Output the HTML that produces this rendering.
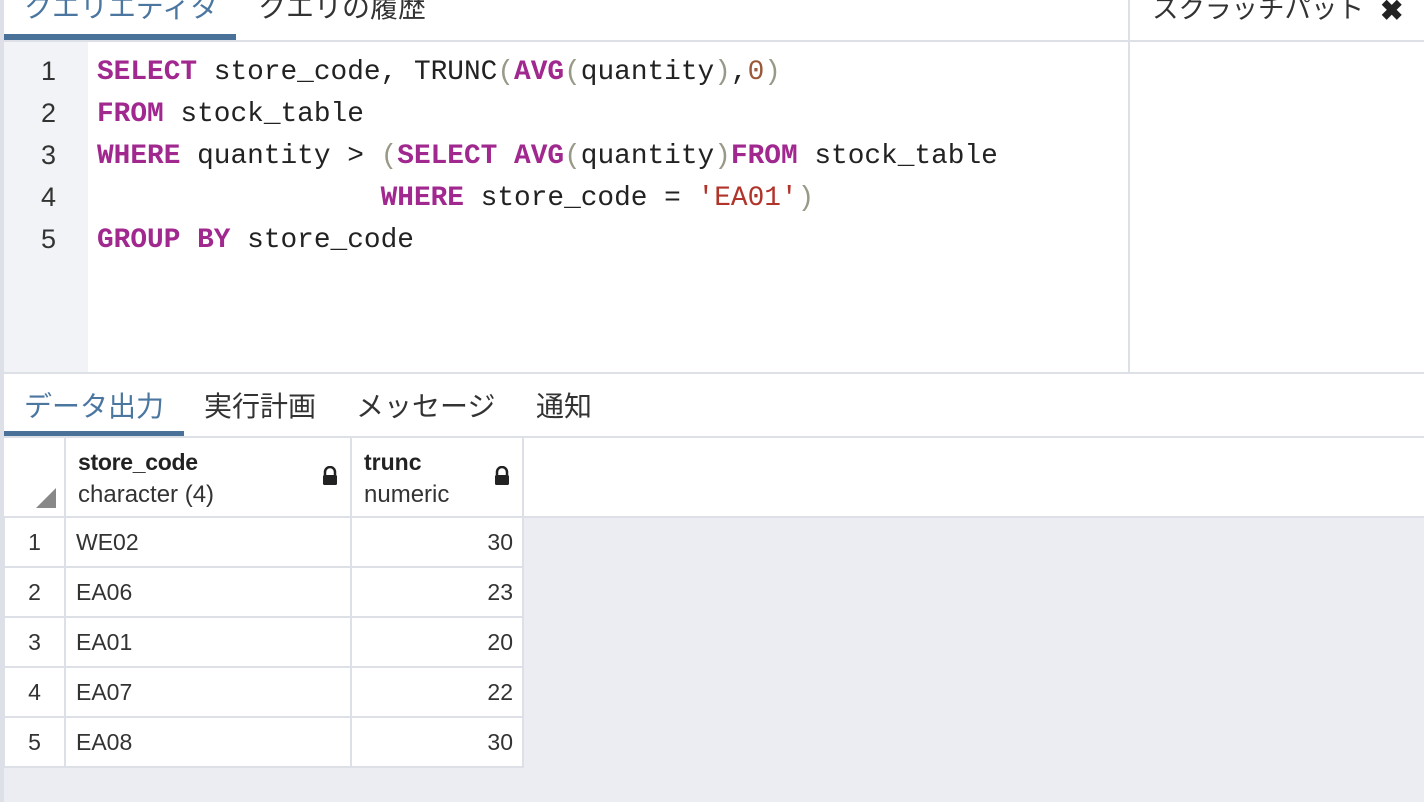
<!DOCTYPE html><html><head><meta charset="utf-8"><style>
*{margin:0;padding:0;box-sizing:border-box}
body{width:1424px;height:802px;overflow:hidden;background:#fff;position:relative;font-family:"Liberation Sans","Noto Sans CJK JP",sans-serif;color:#222}
.a{position:absolute}
.tab{font-size:28px;color:#333;white-space:nowrap}
.code{font-family:"Liberation Mono","DejaVu Sans Mono",monospace;font-size:27.8px;color:#222;white-space:pre;line-height:42px}
.k{color:#a0288f;font-weight:bold}.p{color:#998}.n{color:#9a5a3a}.s{color:#b0342a}
.ln{font-family:"Liberation Sans",sans-serif;font-size:27px;color:#333;width:56px;text-align:right;line-height:42px}
.cell{position:absolute;font-size:23px;color:#333;background:#fff}
</style></head><body>
<div class="a" style="left:0;top:0;width:4px;height:802px;background:#dde0e6"></div>
<div class="a tab" style="left:24px;top:-14px;color:#4a76a0">クエリエディタ</div>
<div class="a tab" style="left:258px;top:-14px">クエリの履歴</div>
<div class="a tab" style="left:1152px;top:-13px;font-size:26.5px">スクラッチパット</div>
<div class="a" style="left:1380px;top:-6px;font-size:28px;font-weight:bold;color:#222">✖</div>
<div class="a" style="left:4px;top:34px;width:232px;height:6px;background:#4a7298"></div>
<div class="a" style="left:4px;top:40px;width:1420px;height:2px;background:#dde0e6"></div>
<div class="a" style="left:1128px;top:0;width:2px;height:372px;background:#dde0e6"></div>
<div class="a" style="left:4px;top:42px;width:84px;height:330px;background:#f2f3f6"></div>
<div class="a ln" style="left:0;top:50px">1<br>2<br>3<br>4<br>5</div>
<div class="a code" style="left:97px;top:52px"><span class="k">SELECT</span> store_code, TRUNC<span class="p">(</span><span class="k">AVG</span><span class="p">(</span>quantity<span class="p">)</span>,<span class="n">0</span><span class="p">)</span>
<span class="k">FROM</span> stock_table
<span class="k">WHERE</span> quantity &gt; <span class="p">(</span><span class="k">SELECT</span> <span class="k">AVG</span><span class="p">(</span>quantity<span class="p">)</span><span class="k">FROM</span> stock_table
                 <span class="k">WHERE</span> store_code = <span class="s">'EA01'</span><span class="p">)</span>
<span class="k">GROUP BY</span> store_code</div>
<div class="a" style="left:4px;top:372px;width:1420px;height:2px;background:#dde0e6"></div>
<div class="a tab" style="left:24px;top:385px;color:#4a76a0">データ出力</div>
<div class="a tab" style="left:204px;top:385px">実行計画</div>
<div class="a tab" style="left:356px;top:385px">メッセージ</div>
<div class="a tab" style="left:536px;top:385px">通知</div>
<div class="a" style="left:4px;top:431px;width:180px;height:5px;background:#4a7298"></div>
<div class="a" style="left:4px;top:436px;width:1420px;height:366px;background:#ecedf2"></div>
<div class="a" style="left:4px;top:436px;width:1420px;height:82px;background:#fff;border-top:2px solid #dde0e6;border-bottom:2px solid #dde0e6"></div>
<div class="a" style="left:4px;top:518px;width:520px;height:250px;background:#dde0e6"></div>
<div class="a" style="left:64px;top:436px;width:2px;height:82px;background:#dde0e6"></div>
<div class="a" style="left:350px;top:436px;width:2px;height:82px;background:#dde0e6"></div>
<div class="a" style="left:522px;top:436px;width:2px;height:82px;background:#dde0e6"></div>
<div class="a" style="left:36px;top:488px;width:0;height:0;border-left:20px solid transparent;border-bottom:20px solid #888"></div>
<div class="a" style="left:78px;top:449px;font-size:23px;font-weight:bold;color:#222;letter-spacing:-0.3px">store_code</div>
<div class="a" style="left:78px;top:481px;font-size:24px;color:#333">character (4)</div>
<div class="a" style="left:364px;top:449px;font-size:23px;font-weight:bold;color:#222">trunc</div>
<div class="a" style="left:364px;top:481px;font-size:24px;color:#333">numeric</div>
<svg class="a" style="left:321px;top:466px" width="18" height="20" viewBox="0 0 18 20"><path d="M4 9V6a5 5 0 0 1 10 0v3" fill="none" stroke="#222" stroke-width="2.5"/><rect x="2" y="9" width="14" height="10" rx="1.5" fill="#222"/></svg>
<svg class="a" style="left:493px;top:466px" width="18" height="20" viewBox="0 0 18 20"><path d="M4 9V6a5 5 0 0 1 10 0v3" fill="none" stroke="#222" stroke-width="2.5"/><rect x="2" y="9" width="14" height="10" rx="1.5" fill="#222"/></svg>
<div id="rows"></div>
<script>
var d=[["WE02","30"],["EA06","23"],["EA01","20"],["EA07","22"],["EA08","30"]],h="";
d.forEach(function(r,i){var t=518+i*50;
h+='<div class="cell" style="left:5px;top:'+t+'px;width:59px;height:48px;line-height:48px;text-align:center">'+(i+1)+'</div>';
h+='<div class="cell" style="left:66px;top:'+t+'px;width:284px;height:48px;line-height:48px;padding-left:10px">'+r[0]+'</div>';
h+='<div class="cell" style="left:352px;top:'+t+'px;width:170px;height:48px;line-height:48px;text-align:right;padding-right:9px">'+r[1]+'</div>';});
document.getElementById('rows').innerHTML=h;
</script>
</body></html>
